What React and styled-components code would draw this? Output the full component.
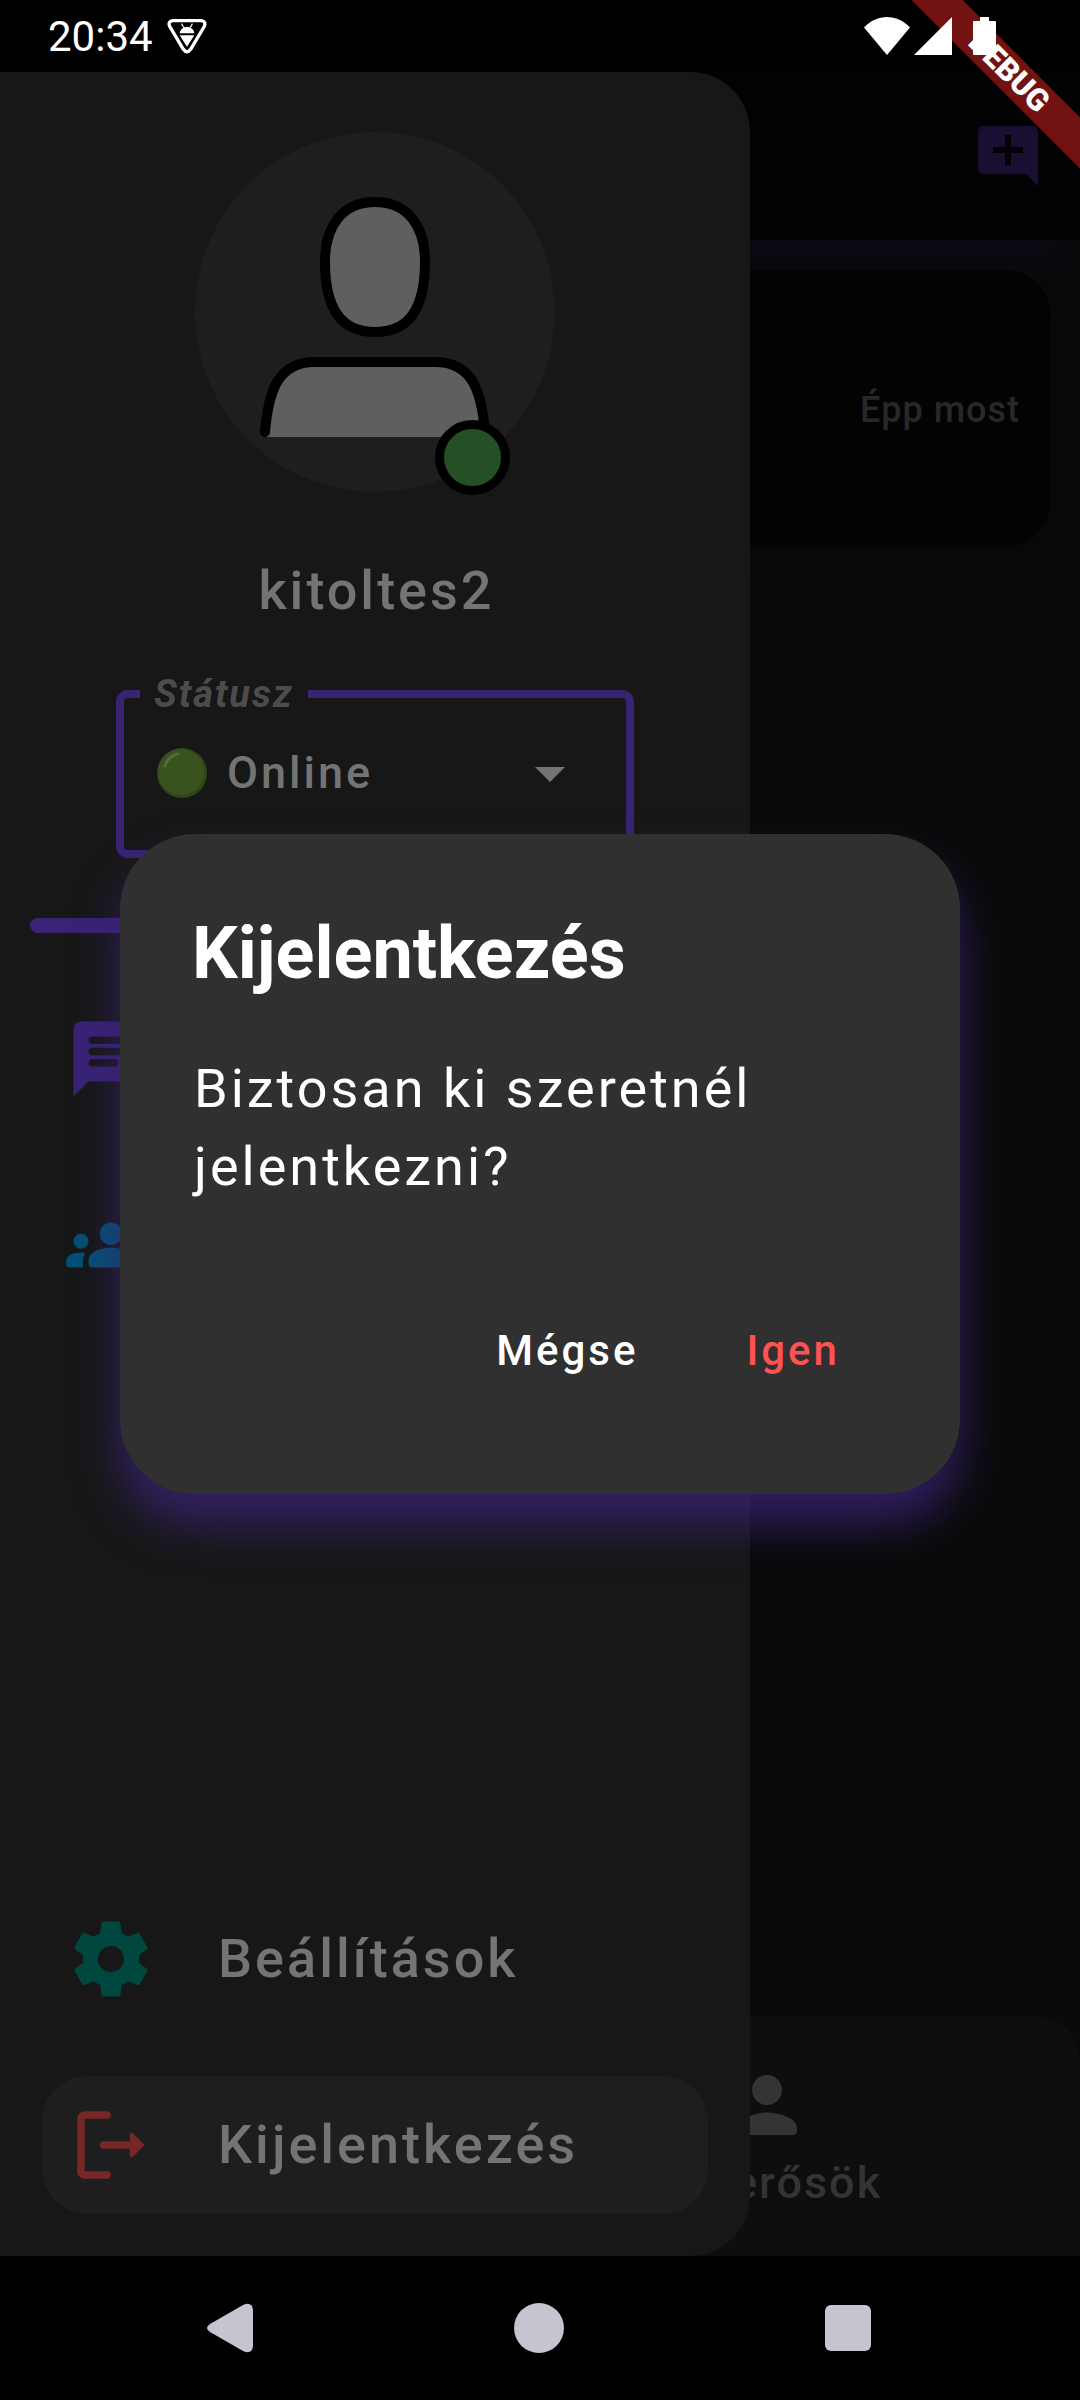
import React from "react";
import styled, { createGlobalStyle } from "styled-components";

const GlobalStyle = createGlobalStyle`
  *, *::before, *::after { box-sizing: border-box; }
  body { margin: 0; background: #000; }
  body, button, select { font-family: Roboto, "Noto Sans", sans-serif; }
  button { border: 0; padding: 0; background: none; cursor: pointer; }
  svg { display: block; flex: none; }
`;

const Device = styled.div`
  position: relative;
  display: flex;
  flex-direction: column;
  min-height: 100vh;
  overflow: hidden;
  background: #000;
`;

const StatusBar = styled.header`
  position: relative;
  z-index: 6;
  display: flex;
  align-items: center;
  justify-content: space-between;
  height: 72px;
  padding: 0 66px 0 48px;
  color: #fff;
  font-size: 42px;
`;

const StatusGroup = styled.div`
  display: flex;
  align-items: center;
  gap: ${(p) => p.$gap}px;
`;

const DebugRibbon = styled.div`
  position: absolute;
  z-index: 5;
  top: 54px;
  right: -59px;
  width: 260px;
  height: 36px;
  background: #731212;
  color: #fff;
  font-size: 31px;
  font-weight: 900;
  line-height: 36px;
  text-align: center;
  transform: rotate(45deg);
`;

const Screen = styled.main`
  position: relative;
  flex: 1;
  display: flex;
  flex-direction: column;
  background: #0a0a0a;
`;

const AppBar = styled.div`
  position: relative;
  z-index: 1;
  display: flex;
  align-items: center;
  justify-content: flex-end;
  height: 168px;
  padding: 0 36px;
  background: #020204;
  color: #1a0f33;
  box-shadow: 0 36px 36px -12px rgba(20, 11, 50, 0.25);
`;

const IconButton = styled.button`
  color: inherit;
`;

const ChatList = styled.div`
  flex: 1;
  padding: 30px;
`;

const ChatCard = styled.article`
  display: flex;
  align-items: center;
  justify-content: flex-end;
  height: 276px;
  padding: 4px 30px 0;
  border-radius: 45px;
  background: #030303;
  box-shadow: 0 9px 18px rgba(0, 0, 0, 0.3);
`;

const CardTime = styled.time`
  color: #282828;
  font-size: 36px;
  font-weight: 500;
  letter-spacing: 1px;
`;

const TabBar = styled.nav`
  display: flex;
  height: 240px;
  padding: 0 86px;
  border-radius: 45px 45px 0 0;
  background: #0e0e0e;
`;

const Tab = styled.button`
  flex: 1;
  display: flex;
  flex-direction: column;
  align-items: center;
  justify-content: center;
  gap: 6px;
  padding-bottom: 2px;
  color: #343434;
  font-size: 45px;
  font-weight: 500;
  letter-spacing: 2px;
  line-height: 54px;
`;

const Drawer = styled.aside`
  position: absolute;
  z-index: 2;
  inset: 0 auto 0 0;
  display: flex;
  flex-direction: column;
  width: 750px;
  max-width: 90%;
  padding: 60px 0 42px;
  border-radius: 0 60px 60px 0;
  background: #171717;
  color: #747474;
`;

const Avatar = styled.div`
  position: relative;
  align-self: center;
`;

const PresenceDot = styled.span`
  position: absolute;
  right: 45px;
  bottom: -3px;
  width: 75px;
  height: 75px;
  border: 9px solid #000;
  border-radius: 50%;
  background: #255025;
`;

const UserName = styled.h1`
  margin: 60px 0 42px;
  padding-left: 3px;
  font-size: 54px;
  font-weight: 500;
  letter-spacing: 3px;
  line-height: 78px;
  text-align: center;
`;

const StatusField = styled.fieldset`
  align-self: center;
  width: 518px;
  height: 186px;
  margin: 0;
  padding: 0 16px;
  border: 8px solid #392375;
  border-radius: 12px;
`;

const StatusLegend = styled.legend`
  padding: 0 14px;
  color: #4c4c4c;
  font-size: 38px;
  font-style: italic;
  font-weight: 700;
  letter-spacing: 2px;
  line-height: 44px;
`;

const StatusRow = styled.div`
  display: flex;
  align-items: center;
  gap: 20px;
  height: 114px;
  padding: 0 24px 0 17px;
`;

const StatusSelect = styled.select`
  flex: 1;
  min-width: 0;
  padding: 0;
  border: 0;
  outline: 0;
  appearance: none;
  background: transparent;
  color: inherit;
  font-size: 45px;
  font-weight: 500;
  letter-spacing: 3px;
  line-height: 54px;
`;

const Divider = styled.hr`
  width: auto;
  height: 15px;
  margin: 60px 30px 57px;
  border: 0;
  border-radius: 8px;
  background: #392375;
`;

const Menu = styled.nav`
  flex: 1;
  display: flex;
  flex-direction: column;
  gap: 48px;
  padding: 0 42px;
`;

const MenuItem = styled.button`
  display: flex;
  align-items: center;
  gap: 62px;
  height: 138px;
  padding: 0 24px;
  margin-top: ${(p) => (p.$pushDown ? "auto" : "0")};
  border-radius: 45px;
  background: ${(p) => (p.$active ? "#1e1e1e" : "transparent")};
  color: #747474;
  font-size: 54px;
  font-weight: 500;
  letter-spacing: 3px;
  line-height: 78px;

  svg { color: ${(p) => p.$tint}; }
`;

const Overlay = styled.div`
  position: absolute;
  z-index: 3;
  inset: 0;
  display: flex;
  align-items: center;
  padding: 0 120px;
`;

const Dialog = styled.section`
  flex: 1;
  padding: 72px 72px 96px;
  border-radius: 75px;
  background: #303030;
  color: #fff;
  box-shadow: 0 30px 45px rgba(57, 35, 117, 0.8);
`;

const DialogTitle = styled.h2`
  margin: 0 0 48px;
  font-size: 72px;
  font-weight: 700;
  line-height: 96px;
`;

const DialogText = styled.p`
  margin: 0 0 96px;
  padding-left: 2px;
  font-size: 54px;
  letter-spacing: 3px;
  line-height: 78px;
`;

const DialogActions = styled.div`
  display: flex;
  justify-content: flex-end;
  gap: 12px;
`;

const DialogButton = styled.button`
  height: 96px;
  padding: 0 48px;
  color: ${(p) => (p.$danger ? "#ff5252" : "#fff")};
  font-size: 42px;
  font-weight: 500;
  letter-spacing: 3px;
`;

const SystemNav = styled.footer`
  display: flex;
  justify-content: center;
  height: 144px;
  padding-right: 2px;
  color: #c6c5cf;
`;

const SystemButton = styled.button`
  display: flex;
  align-items: center;
  justify-content: center;
  width: 309px;
  color: inherit;
`;

const Glyph = ({ size = 90, d }) => (
  <svg width={size} height={size} viewBox="0 0 24 24" fill="currentColor" aria-hidden="true">
    <path d={d} />
  </svg>
);

const paths = {
  addComment:
    "M22 4c0-1.1-.9-2-2-2H4c-1.1 0-2 .9-2 2v12c0 1.1.9 2 2 2h14l4 4V4zm-5 7h-4v4h-2v-4H7V9h4V5h2v4h4v2z",
  chat: "M20 2H4c-1.1 0-2 .9-2 2v18l4-4h14c1.1 0 2-.9 2-2V4c0-1.1-.9-2-2-2zM7 9h10c.55 0 1 .45 1 1s-.45 1-1 1H7c-.55 0-1-.45-1-1s.45-1 1-1zm6 5H7c-.55 0-1-.45-1-1s.45-1 1-1h6c.55 0 1 .45 1 1s-.45 1-1 1zm4-6H7c-.55 0-1-.45-1-1s.45-1 1-1h10c.55 0 1 .45 1 1s-.45 1-1 1z",
  groups:
    "M12 12.75c1.63 0 3.07.39 4.24.9 1.08.48 1.76 1.56 1.76 2.73V17c0 .55-.45 1-1 1H7c-.55 0-1-.45-1-1v-.61c0-1.18.68-2.26 1.76-2.73 1.17-.52 2.61-.91 4.24-.91zM4 13c1.1 0 2-.9 2-2s-.9-2-2-2-2 .9-2 2 .9 2 2 2zm1.13 1.1c-.37-.06-.74-.1-1.13-.1-.99 0-1.93.21-2.78.58C.48 14.9 0 15.62 0 16.43V17c0 .55.45 1 1 1h3.5v-1.61c0-.83.23-1.61.63-2.29zM20 13c1.1 0 2-.9 2-2s-.9-2-2-2-2 .9-2 2 .9 2 2 2zm4 3.43c0-.81-.48-1.53-1.22-1.85-.85-.37-1.79-.58-2.78-.58-.39 0-.76.04-1.13.1.4.68.63 1.46.63 2.29V18H23c.55 0 1-.45 1-1v-.57zM12 6c1.66 0 3 1.34 3 3s-1.34 3-3 3-3-1.34-3-3 1.34-3 3-3z",
  settings:
    "M19.43 12.98c.04-.32.07-.64.07-.98s-.03-.66-.07-.98l2.11-1.65c.19-.15.24-.42.12-.64l-2-3.46c-.12-.22-.39-.3-.61-.22l-2.49 1c-.52-.4-1.08-.73-1.69-.98l-.38-2.65C14.46 2.18 14.25 2 14 2h-4c-.25 0-.46.18-.49.42l-.38 2.65c-.61.25-1.17.59-1.69.98l-2.49-1c-.23-.09-.49 0-.61.22l-2 3.46c-.13.22-.07.49.12.64l2.11 1.65c-.04.32-.07.65-.07.98s.03.66.07.98l-2.11 1.65c-.19.15-.24.42-.12.64l2 3.46c.12.22.39.3.61.22l2.49-1c.52.4 1.08.73 1.69.98l.38 2.65c.03.24.24.42.49.42h4c.25 0 .46-.18.49-.42l.38-2.65c.61-.25 1.17-.59 1.69-.98l2.49 1c.23.09.49 0 .61-.22l2-3.46c.12-.22.07-.49-.12-.64l-2.11-1.65zM12 15.5c-1.93 0-3.5-1.57-3.5-3.5s1.57-3.5 3.5-3.5 3.5 1.57 3.5 3.5-1.57 3.5-3.5 3.5z",
  logout:
    "M5 3h6c.55 0 1 .45 1 1s-.45 1-1 1H5v14h6c.55 0 1 .45 1 1s-.45 1-1 1H5c-1.1 0-2-.9-2-2V5c0-1.1.9-2 2-2zm15.65 8.65l-2.79-2.79c-.32-.32-.86-.1-.86.35V11h-7c-.55 0-1 .45-1 1s.45 1 1 1h7v1.79c0 .45.54.67.85.35l2.79-2.79c.2-.19.2-.51.01-.7z",
  person:
    "M12 12c2.21 0 4-1.79 4-4s-1.79-4-4-4-4 1.79-4 4 1.79 4 4 4zm0 2c-2.67 0-8 1.34-8 4v1c0 .55.45 1 1 1h14c.55 0 1-.45 1-1v-1c0-2.66-5.33-4-8-4z",
  dropDown: "M7 10l5 5 5-5z",
};

const BadgeIcon = () => (
  <svg width="40" height="38" viewBox="0 0 120 114" aria-hidden="true">
    <path
      d="M18 11H102Q118 13 112 28L71 97Q60 112 49 97L8 28Q2 13 18 11Z"
      fill="none"
      stroke="#fff"
      strokeWidth="10"
    />
    <path d="M38 49Q40 31 60 29Q80 31 82 49ZM38 55H82L60 89Z" fill="#fff" />
    <path d="M44 20Q46 28 52 32M76 20Q74 28 68 32" fill="none" stroke="#fff" strokeWidth="4" />
  </svg>
);

const WifiIcon = () => (
  <svg width="46" height="38" viewBox="0 0 46 38" fill="#fff" aria-hidden="true">
    <path d="M0 10.500C13-3.500 33-3.500 46 10.500L23 38Z" />
  </svg>
);

const SignalIcon = () => (
  <svg width="38" height="38" viewBox="0 0 38 38" fill="#fff" aria-hidden="true">
    <path d="M38 0V38H0Z" />
  </svg>
);

const BatteryIcon = () => (
  <svg width="58" height="38" viewBox="0 0 58 38" fill="#fff" aria-hidden="true">
    <path d="M24 0h9v4h6q1 0 1 1v32q0 1-1 1H18q-1 0-1-1V5q0-1 1-1h6Z" />
  </svg>
);

const AvatarArt = () => (
  <svg width="360" height="360" viewBox="45 66 1080 1080" role="img" aria-label="Profilkép">
    <circle cx="585" cy="606" r="540" fill="#1e1e1e" />
    <path
      d="M585 276C680 276 735 345 735 455C735 590 690 666 585 666C480 666 435 590 435 455C435 345 490 276 585 276Z"
      fill="#5f5f5f"
      stroke="#000"
      strokeWidth="30"
    />
    <path d="M255 981C265 850 290 756 405 756H765C880 756 905 850 915 981Z" fill="#5f5f5f" />
    <path
      d="M255 966C265 850 290 756 405 756H765C880 756 905 850 915 966"
      fill="none"
      stroke="#000"
      strokeWidth="30"
      strokeLinecap="round"
    />
  </svg>
);

const OnlineDot = () => (
  <svg width="50" height="50" viewBox="0 0 50 50" aria-hidden="true">
    <circle cx="25" cy="25" r="25" fill="#2f4819" />
    <circle cx="24" cy="24" r="23" fill="#3a521e" />
    <path d="M8 18Q11 8 21 6" fill="none" stroke="#56693f" strokeWidth="3" strokeLinecap="round" />
  </svg>
);

export default function App() {
  return (
    <Device>
      <GlobalStyle />
      <StatusBar>
        <StatusGroup $gap={14}>
          <span>20:34</span>
          <BadgeIcon />
        </StatusGroup>
        <StatusGroup $gap={4}>
          <WifiIcon />
          <SignalIcon />
          <BatteryIcon />
        </StatusGroup>
      </StatusBar>
      <DebugRibbon>DEBUG</DebugRibbon>

      <Screen>
        <AppBar>
          <IconButton type="button" aria-label="Új csevegés">
            <Glyph size={72} d={paths.addComment} />
          </IconButton>
        </AppBar>
        <ChatList>
          <ChatCard>
            <CardTime>Épp most</CardTime>
          </ChatCard>
        </ChatList>
        <TabBar>
          <Tab type="button" aria-label="Csevegések">
            <Glyph d={paths.chat} />
          </Tab>
          <Tab type="button">
            <Glyph d={paths.person} />
            Ismerősök
          </Tab>
        </TabBar>

        <Drawer>
          <Avatar>
            <AvatarArt />
            <PresenceDot />
          </Avatar>
          <UserName>kitoltes2</UserName>
          <StatusField>
            <StatusLegend>Státusz</StatusLegend>
            <StatusRow>
              <OnlineDot />
              <StatusSelect aria-label="Státusz" defaultValue="online">
                <option value="online">Online</option>
              </StatusSelect>
              <Glyph size={72} d={paths.dropDown} />
            </StatusRow>
          </StatusField>
          <Divider />
          <Menu>
            <MenuItem type="button" $tint="#392375" aria-label="Csevegések">
              <Glyph d={paths.chat} />
            </MenuItem>
            <MenuItem type="button" $tint="#045074" aria-label="Ismerősök">
              <Glyph d={paths.groups} />
            </MenuItem>
            <MenuItem type="button" $tint="#00483f" $pushDown>
              <Glyph d={paths.settings} />
              Beállítások
            </MenuItem>
            <MenuItem type="button" $tint="#772727" $active>
              <Glyph d={paths.logout} />
              Kijelentkezés
            </MenuItem>
          </Menu>
        </Drawer>

        <Overlay>
          <Dialog role="dialog" aria-modal="true" aria-labelledby="logout-title">
            <DialogTitle id="logout-title">Kijelentkezés</DialogTitle>
            <DialogText>Biztosan ki szeretnél jelentkezni?</DialogText>
            <DialogActions>
              <DialogButton type="button">Mégse</DialogButton>
              <DialogButton type="button" $danger>
                Igen
              </DialogButton>
            </DialogActions>
          </Dialog>
        </Overlay>
      </Screen>

      <SystemNav>
        <SystemButton type="button" aria-label="Vissza">
          <svg width="46" height="50" viewBox="0 0 46 50" fill="currentColor">
            <path d="M3 21L36 2Q45-2 46 7V43Q45 52 36 48L3 29Q-3 25 3 21Z" />
          </svg>
        </SystemButton>
        <SystemButton type="button" aria-label="Kezdőképernyő">
          <svg width="50" height="50" viewBox="0 0 50 50" fill="currentColor">
            <circle cx="25" cy="25" r="25" />
          </svg>
        </SystemButton>
        <SystemButton type="button" aria-label="Áttekintés">
          <svg width="46" height="46" viewBox="0 0 46 46" fill="currentColor">
            <rect width="46" height="46" rx="6" />
          </svg>
        </SystemButton>
      </SystemNav>
    </Device>
  );
}
